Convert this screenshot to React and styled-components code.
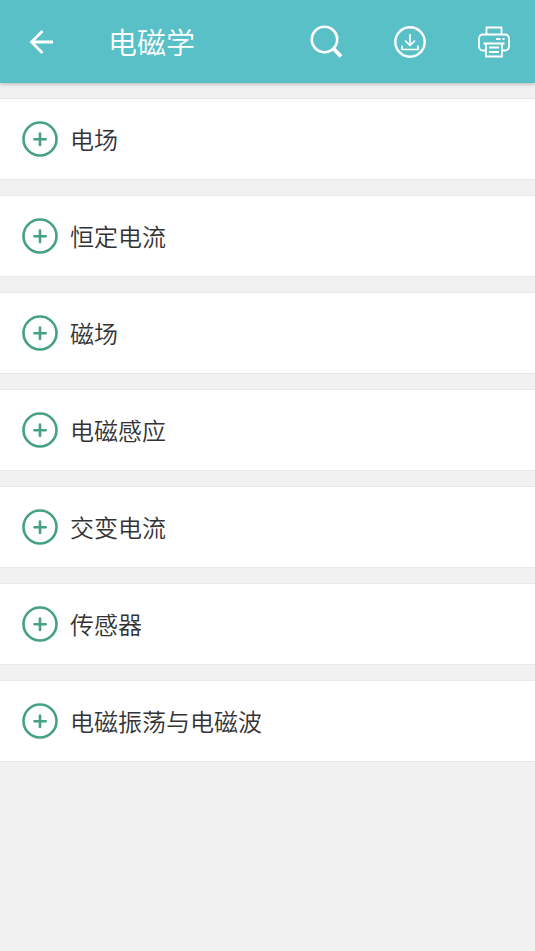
import React from "react";
import styled, { createGlobalStyle } from "styled-components";

const GlobalStyle = createGlobalStyle`
  *, *::before, *::after { box-sizing: border-box; }
  body {
    margin: 0;
    background: #f1f1f1;
    color: #333;
    font-family: "Noto Sans CJK SC", "Noto Sans", sans-serif;
  }
`;

const Toolbar = styled.header`
  display: flex;
  align-items: center;
  height: 83px;
  padding: 0 19px;
  background: #5ac0c8;
  color: #fff;
  box-shadow: 0 1px 4px rgba(0, 0, 0, 0.25);
`;

const Title = styled.h1`
  flex: 1;
  margin: 0 0 0 45px;
  padding-bottom: 2px;
  font-size: 29px;
  line-height: 40px;
  font-weight: 350;
`;

const Actions = styled.div`
  display: flex;
  gap: 40px;
`;

const IconButton = styled.button`
  display: flex;
  align-items: center;
  justify-content: center;
  width: 44px;
  height: 44px;
  padding: 0;
  border: 0;
  background: none;
  color: inherit;
  cursor: pointer;
`;

const Icon = styled.svg`
  display: block;
  flex: none;
  width: ${(p) => p.$size}px;
  height: ${(p) => p.$size}px;
  fill: none;
  stroke: currentColor;
  stroke-width: ${(p) => p.$stroke};
`;

const List = styled.ul`
  display: flex;
  flex-direction: column;
  gap: 15px;
  margin: 15px 0;
  padding: 0;
  list-style: none;
`;

const Row = styled.button`
  display: flex;
  align-items: center;
  gap: 12px;
  width: 100%;
  height: 82px;
  padding: 0 22px;
  border: 0;
  border-top: 1px solid #e9e9e9;
  border-bottom: 1px solid #e9e9e9;
  background: #fff;
  color: #333;
  font: inherit;
  font-size: 24px;
  line-height: 36px;
  font-weight: 350;
  text-align: left;
  cursor: pointer;
`;

const ExpandIcon = styled(Icon)`
  color: #46a084;
`;

const chapters = ["电场", "恒定电流", "磁场", "电磁感应", "交变电流", "传感器", "电磁振荡与电磁波"];

function Chapter({ name }) {
  return (
    <li>
      <Row type="button" aria-expanded="false">
        <ExpandIcon viewBox="0 0 36 36" $size={36} $stroke={2.6} aria-hidden="true">
          <circle cx="18" cy="18" r="16.5" />
          <path d="M18 12.500v11.500M12.500 18.200h11.200" strokeLinecap="round" />
        </ExpandIcon>
        <span>{name}</span>
      </Row>
    </li>
  );
}

export default function App() {
  return (
    <>
      <GlobalStyle />
      <Toolbar>
        <IconButton type="button" aria-label="返回">
          <Icon viewBox="0 0 24 24" $size={24} $stroke={2.8}>
            <path d="M13.500 1 2.500 12l11 11M2.500 12H24" />
          </Icon>
        </IconButton>
        <Title>电磁学</Title>
        <Actions>
          <IconButton type="button" aria-label="搜索">
            <Icon viewBox="0 0 34 34" $size={34} $stroke={2.6}>
              <circle cx="15.500" cy="14.500" r="12.700" />
              <path d="m24 23 8 8.500" strokeWidth="4" />
            </Icon>
          </IconButton>
          <IconButton type="button" aria-label="下载">
            <Icon viewBox="0 0 34 34" $size={34} $stroke={1.7}>
              <circle cx="17" cy="17" r="14.700" strokeWidth="2.400" />
              <path d="M17 9v11.500M12 15.500l5 5 5-5M9 20.500v4h16v-4" strokeLinejoin="round" />
            </Icon>
          </IconButton>
          <IconButton type="button" aria-label="打印">
            <Icon viewBox="0 0 34 34" $size={34} $stroke={1.8}>
              <path d="M9.500 9.500V2.500h15v7" />
              <path d="M8.500 25.500H6a4 4 0 0 1-4-4V13.500a4 4 0 0 1 4-4h22a4 4 0 0 1 4 4v8a4 4 0 0 1-4 4h-2.500" />
              <path d="M6.500 18.500h21M9 18.500v13h16v-13M12 22.500h10M12 27h10M19 14h4.500M25.500 14h2" />
            </Icon>
          </IconButton>
        </Actions>
      </Toolbar>
      <main>
        <List>
          {chapters.map((name) => (
            <Chapter key={name} name={name} />
          ))}
        </List>
      </main>
    </>
  );
}
